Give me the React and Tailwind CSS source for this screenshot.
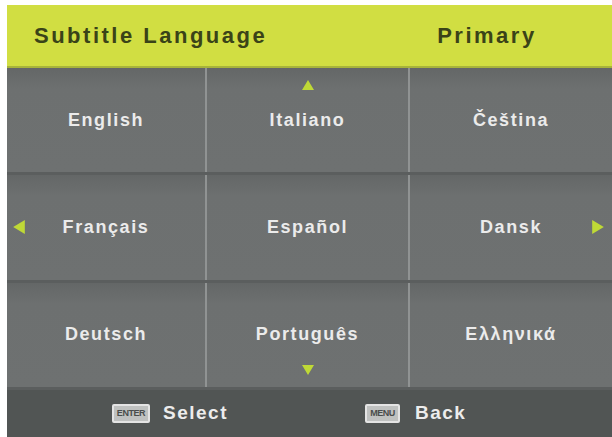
const rows = [
  ["English", "Italiano", "Čeština"],
  ["Français", "Español", "Dansk"],
  ["Deutsch", "Português", "Ελληνικά"],
];

const Tri = ({ dir, className }) => {
  const pts = {
    up: "0,10 6,0 12,10",
    down: "0,0 12,0 6,10",
    left: "10,0 10,12 0,6",
    right: "0,0 0,12 10,6",
  }[dir];
  const box = dir === "up" || dir === "down" ? "0 0 12 10" : "0 0 10 12";
  return (
    <svg viewBox={box} className={className}>
      <polygon points={pts} fill="#bfd936" />
    </svg>
  );
};

const KeyCap = ({ label, w }) => (
  <span
    className={
      "inline-flex h-[19px] items-center justify-center rounded-[2px] border-2 border-[#e4e4e4] bg-[#bfc1c0] text-[9px] font-bold leading-none tracking-tighter text-[#4a4d4c] " +
      w
    }
  >
    {label}
  </span>
);

export default function App() {
  return (
    <div
      className="h-[437px] w-[612px] overflow-hidden bg-white pl-[7px] pt-[5px]"
      style={{ fontFamily: '"Liberation Sans", Arial, sans-serif' }}
    >
      <div className="flex h-full flex-col bg-[#6b6e6e]">
        {/* title bar */}
        <div className="flex h-[63px] shrink-0 items-center border-b-2 border-[#a7b43a] bg-[#d1de42] text-[22px] font-bold tracking-[2.5px] text-[#3a4318]">
          <span className="ml-[27px]">Subtitle Language</span>
          <span className="ml-[170px]">Primary</span>
        </div>

        {/* language grid */}
        <div className="grid h-[322px] shrink-0 grid-rows-3">
          {rows.map((row, r) => (
            <div
              key={r}
              className="grid grid-cols-[198px_203px_1fr] border-b-[3px] border-[#5b5e5e]"
            >
              {row.map((lang, c) => (
                <div
                  key={lang}
                  className={
                    "relative flex items-center justify-center bg-gradient-to-b from-[#646767] from-0% via-[#6d7070] via-20% to-[#6e7171] text-[18px] font-bold tracking-[1.6px] text-[#ebebeb] " +
                    (c > 0 ? "border-l-2 border-[#909393]" : "")
                  }
                >
                  {r === 0 && c === 1 && (
                    <Tri dir="up" className="absolute left-1/2 top-[12px] h-[10px] w-[12px] -translate-x-1/2" />
                  )}
                  {r === 2 && c === 1 && (
                    <Tri dir="down" className="absolute bottom-[12px] left-1/2 h-[10px] w-[12px] -translate-x-1/2" />
                  )}
                  {r === 1 && c === 0 && (
                    <Tri dir="left" className="absolute left-[6px] top-1/2 h-[14px] w-[12px] -translate-y-1/2" />
                  )}
                  {r === 1 && c === 2 && (
                    <Tri dir="right" className="absolute right-[8px] top-1/2 h-[14px] w-[12px] -translate-y-1/2" />
                  )}
                  <span>{lang}</span>
                </div>
              ))}
            </div>
          ))}
        </div>

        {/* key hints */}
        <div className="flex flex-1 items-center bg-[#515554] text-[19px] font-bold tracking-[1.5px] text-[#ececec]">
          <div className="ml-[105px] flex items-center gap-[13px]">
            <KeyCap label="ENTER" w="w-[38px]" />
            <span>Select</span>
          </div>
          <div className="ml-[137px] flex items-center gap-[15px]">
            <KeyCap label="MENU" w="w-[35px]" />
            <span>Back</span>
          </div>
        </div>
      </div>
    </div>
  );
}
